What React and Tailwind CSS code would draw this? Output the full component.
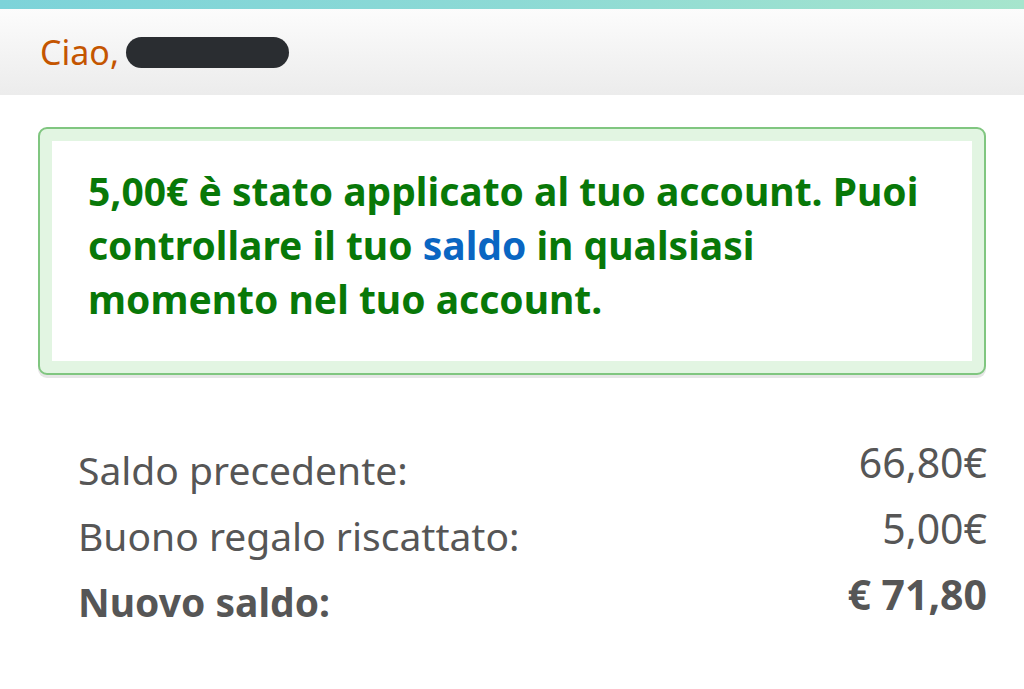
export default function App() {
  return (
    <div className="w-[1024px] h-[689px] bg-white overflow-hidden" style={{ fontFamily: '"Noto Sans", "Open Sans", sans-serif' }}>
      {/* top accent strip */}
      <div className="h-[9px] bg-gradient-to-r from-[#7dd3d9] via-[#8ddad5] to-[#a6e5cd]" />

      {/* greeting bar */}
      <div className="h-[86px] bg-gradient-to-b from-[#fcfcfc] to-[#ececec] flex items-center px-[40px]">
        <span className="text-[34px] text-[#c45500] leading-none">Ciao,</span>
        <span className="ml-[7px] w-[163px] h-[31px] rounded-full bg-[#2a2d31]" />
      </div>

      {/* success alert */}
      <div className="px-[38px] pt-[32px]">
        <div className="rounded-[9px] border-2 border-[#80c680] bg-[#e2f5e2] p-[12px] shadow-[0_3px_0_#e6e6e6]">
          <div className="bg-white h-[220px] pl-[36px] pt-[23px]">
            <p className="text-[39px] leading-[54px] font-bold text-[#087808]">
              5,00€ è stato applicato al tuo account. Puoi
              <br />
              controllare il tuo <span className="text-[#0a66c2]">saldo</span> in qualsiasi
              <br />
              momento nel tuo account.
            </p>
          </div>
        </div>
      </div>

      {/* balance summary */}
      <div className="pl-[78px] pr-[37px] pt-[63px] text-[#565656]">
        <div className="flex justify-between items-start h-[66px] leading-[48px]">
          <span className="mt-[8px] text-[39px]">Saldo precedente:</span>
          <span className="text-[41px]">66,80€</span>
        </div>
        <div className="flex justify-between items-start h-[66px] leading-[48px]">
          <span className="mt-[8px] text-[39px]">Buono regalo riscattato:</span>
          <span className="text-[41px]">5,00€</span>
        </div>
        <div className="flex justify-between items-start leading-[48px] font-bold">
          <span className="mt-[8px] text-[39px]">Nuovo saldo:</span>
          <span className="text-[41px]">€ 71,80</span>
        </div>
      </div>
    </div>
  );
}
